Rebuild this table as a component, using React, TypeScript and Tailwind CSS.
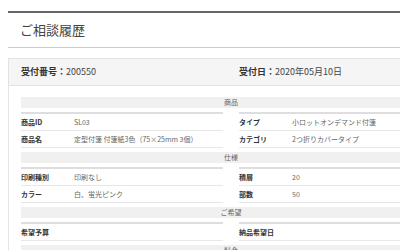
type Row = [string, string, string, string]

const sections: { title: string; rows: Row[] }[] = [
  {
    title: '商品',
    rows: [
      ['商品ID', 'SL03', 'タイプ', '小ロットオンデマンド付箋'],
      ['商品名', '定型付箋 付箋紙3色（75×25mm 3個）', 'カテゴリ', '2つ折りカバータイプ'],
    ],
  },
  {
    title: '仕様',
    rows: [
      ['印刷種別', '印刷なし', '積層', '20'],
      ['カラー', '白、蛍光ピンク', '部数', '50'],
    ],
  },
  {
    title: 'ご希望',
    rows: [['希望予算', '', '納品希望日', '']],
  },
  {
    title: '料金',
    rows: [],
  },
]

function Cells({ rows, side }: { rows: Row[]; side: 0 | 1 }) {
  return (
    <div className="border-t-2 border-[#dedede]">
      {rows.map((r) => (
        <div key={r[side * 2]} className="h-[17px] flex items-center border-b border-[#e8e8e8]">
          <div className="w-[53px] shrink-0 font-bold text-[#333]">{r[side * 2]}</div>
          <div className="text-[#666] whitespace-nowrap">{r[side * 2 + 1]}</div>
        </div>
      ))}
    </div>
  )
}

export default function App() {
  return (
    <div className="w-[454px] pl-2 pt-[11px] bg-white font-['Noto_Sans_CJK_JP','Noto_Sans',sans-serif] text-[#333]">
      <div className="h-[37px] border-t-2 border-[#666] border-b border-b-[#ccc] flex items-center pl-3 text-[13px] text-[#444]">
        ご相談履歴
      </div>

      <div className="mt-[10px] border border-[#e3e3e3]">
        <div className="h-[27px] bg-[#f5f5f5] border-b border-[#e3e3e3] px-3 grid grid-cols-2 gap-x-4 items-center text-[9px]">
          <div>
            <span className="font-bold">受付番号：</span>
            <span className="text-[#444]">200550</span>
          </div>
          <div>
            <span className="font-bold">受付日：</span>
            <span className="text-[#444]">2020年05月10日</span>
          </div>
        </div>

        <div className="px-3 pt-[11px] text-[7px]">
          {sections.map((s) => (
            <div key={s.title} className="mb-[4px]">
              <div className="h-[11px] bg-[#f0f0f0] flex items-center justify-center text-[#666]">
                {s.title}
              </div>
              {s.rows.length > 0 && (
                <div className="mt-[4px] grid grid-cols-2 gap-x-4">
                  <Cells rows={s.rows} side={0} />
                  <Cells rows={s.rows} side={1} />
                </div>
              )}
            </div>
          ))}
        </div>
      </div>
    </div>
  )
}
